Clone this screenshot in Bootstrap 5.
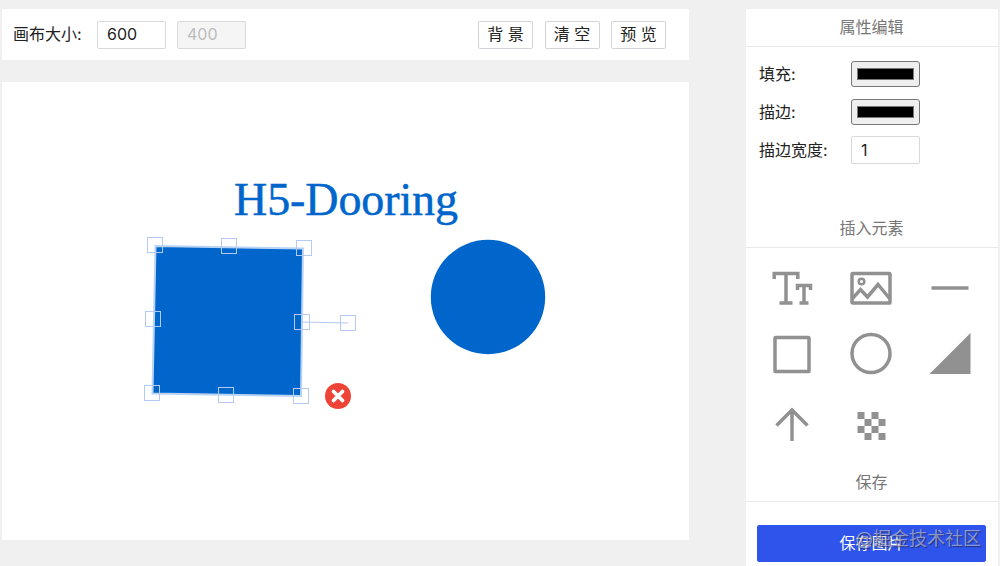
<!DOCTYPE html>
<html lang="zh-CN">
<head>
  <meta charset="UTF-8"/>
  <meta name="viewport" content="width=device-width, initial-scale=1.0"/>
  <title>H5-Dooring 图片编辑器</title>
  <link href="https://cdn.jsdelivr.net/npm/bootstrap@5.3.0/dist/css/bootstrap.min.css" rel="stylesheet"/>
  <script src="https://cdn.jsdelivr.net/npm/bootstrap@5.3.0/dist/js/bootstrap.bundle.min.js" defer></script>
  <style>
    :root {
      --page-bg: #f0f0f0;
      --shape-blue: #0066cc;
      --save-blue: #2f54eb;
      --icon-gray: #919191;
    }

    body {
      background-color: var(--page-bg);
      font-family: Inter, "Noto Sans CJK SC", sans-serif;
      font-size: 16px;
      line-height: 24px;
      color: #222;
    }

    .editor {
      height: 566px;
      padding: 9px 2px 0;
    }

    .workspace { width: 687px; }

    .toolbar {
      height: 51px;
      padding: 0 23px 0 11px;
      margin-bottom: 22px;
    }

    .size-label { width: 84px; padding-bottom: 2px; }
    .size-group { gap: 11px; }
    .tool-group { gap: 11.5px; }

    .field.form-control {
      width: 69px;
      height: 28px;
      padding: 0 9px;
      font-size: 16px;
      line-height: 26px;
      color: #222;
      border: 1px solid #d9d9d9;
      border-radius: 2px;
    }

    .size-group .field.form-control { padding-bottom: 1px; }

    .field.form-control:disabled {
      background-color: #f5f5f5;
      color: #bcbcbc;
    }

    .tool-btn.btn {
      width: 55px;
      height: 28px;
      padding: 0;
      font-size: 16px;
      line-height: 25px;
      color: #222;
      background-color: white;
      border: 1px solid #d4d4d8;
      border-radius: 2px;
    }

    .stage { height: 458px; }

    .stage text {
      font-family: "Liberation Serif", serif;
      font-size: 46px;
      fill: var(--shape-blue);
      stroke: var(--shape-blue);
      stroke-width: 0.5;
    }

    .sidebar { width: 252px; }

    .panel-title {
      height: 38px;
      padding-right: 1px;
      font-size: 16px;
      line-height: 37px;
      font-weight: 400;
      color: #777;
      border-bottom: 1px solid #e9e9e9;
    }

    .props {
      height: 163px;
      padding: 14.4px 13px 0;
    }

    .prop-row { height: 26px; margin-bottom: 11.7px; }
    .prop-label { width: 92px; }

    .swatch {
      width: 69px;
      height: 26px;
      padding: 6px 5px;
      background-color: #efefef;
      border: 1px solid #777;
      border-radius: 3px;
    }

    .swatch span {
      height: 100%;
      background-color: black;
      border: 1px solid #777;
    }

    .elements {
      height: 216px;
      padding: 7px 8px 0 7px;
    }

    .elements svg {
      width: 48px;
      height: 48px;
      fill: none;
      stroke: var(--icon-gray);
      stroke-width: 3.5;
    }

    .elements .solid { fill: var(--icon-gray); stroke: none; }
    .cell { height: 66px; }

    .save-area { padding: 23px 12px 0 11px; }

    .save-btn.btn {
      height: 37px;
      padding: 0;
      font-size: 16px;
      line-height: 35px;
      color: white;
      background-color: var(--save-blue);
      border-color: var(--save-blue);
      border-radius: 2px;
    }

    .watermark {
      right: 17px;
      top: 24px;
      font-size: 18px;
      line-height: 26px;
      color: rgba(205, 205, 215, 0.6);
      text-shadow: 1px 1px 1px rgba(30, 30, 60, 0.65);
      pointer-events: none;
    }
  </style>
</head>
<body>

<div class="editor d-flex justify-content-between overflow-hidden">
  <main class="workspace">
    <div class="toolbar bg-white d-flex align-items-center justify-content-between">
      <div class="d-flex align-items-center">
        <span class="size-label text-nowrap">画布大小:</span>
        <div class="size-group d-flex">
          <input type="text" class="field form-control" value="600" aria-label="宽度">
          <input type="text" class="field form-control" value="400" aria-label="高度" disabled>
        </div>
      </div>
      <div class="tool-group d-flex">
        <button type="button" class="tool-btn btn">背 景</button>
        <button type="button" class="tool-btn btn">清 空</button>
        <button type="button" class="tool-btn btn">预 览</button>
      </div>
    </div>

    <div class="stage bg-white">
      <svg class="d-block" width="687" height="458" viewBox="2 82 687 458">
        <text x="234" y="215" textLength="224">H5-Dooring</text>
        <circle cx="488" cy="297" r="57.2" fill="#0066cc"/>
        <path d="M155.500 246L303 248.500L301 396L152.500 393.500Z" fill="#0066cc" stroke="#b9d3f5" stroke-width="2"/>
        <!-- selection handles -->
        <g fill="none" stroke="#b4c9f3" stroke-width="1">
          <path d="M302 322L348 323"/>
          <rect x="147.500" y="237.500" width="15" height="15"/>
          <rect x="221.500" y="238.500" width="15" height="15"/>
          <rect x="296.500" y="240.500" width="15" height="15"/>
          <rect x="145.500" y="311.500" width="15" height="15"/>
          <rect x="294.500" y="314.500" width="15" height="15"/>
          <rect x="340.500" y="315.500" width="15" height="15"/>
          <rect x="144.500" y="385.500" width="15" height="15"/>
          <rect x="218.500" y="387.500" width="15" height="15"/>
          <rect x="293.500" y="388.500" width="15" height="15"/>
        </g>
        <!-- delete control -->
        <circle cx="338" cy="396" r="13" fill="#ee4438"/>
        <path d="M333.500 391.500L342.500 400.500M342.500 391.500L333.500 400.500" stroke="white" stroke-width="3.800" stroke-linecap="round"/>
      </svg>
    </div>
  </main>

  <aside class="sidebar bg-white">
    <h2 class="panel-title text-center mb-0">属性编辑</h2>
    <div class="props">
      <div class="prop-row d-flex align-items-center">
        <span class="prop-label">填充:</span>
        <button type="button" class="swatch" aria-label="填充"><span class="d-block"></span></button>
      </div>
      <div class="prop-row d-flex align-items-center">
        <span class="prop-label">描边:</span>
        <button type="button" class="swatch" aria-label="描边"><span class="d-block"></span></button>
      </div>
      <div class="prop-row d-flex align-items-center">
        <span class="prop-label">描边宽度:</span>
        <input type="text" class="field form-control" value="1" aria-label="描边宽度">
      </div>
    </div>

    <h2 class="panel-title text-center mb-0">插入元素</h2>
    <div class="elements">
      <div class="row row-cols-3 g-0">
        <div class="cell col d-flex justify-content-center align-items-center">
          <svg viewBox="0 0 48 48"><path d="M6.200 15V9.500H29.800V15M18 9.500V39M11.500 39H24.500M29.500 26V21.500H42.500V26M36 21.500V39M31.500 39H40.500"/></svg>
        </div>
        <div class="cell col d-flex justify-content-center align-items-center">
          <svg viewBox="0 0 48 48"><rect x="5" y="9.500" width="38" height="29.500" rx="0.800"/><circle cx="14.500" cy="17.500" r="2.800" stroke-width="2.500"/><path d="M5 35L13.500 25.500L20.500 33L31 20.500L43 35"/></svg>
        </div>
        <div class="cell col d-flex justify-content-center align-items-center">
          <svg viewBox="0 0 48 48"><path d="M5.500 24H42.500"/></svg>
        </div>
        <div class="cell col d-flex justify-content-center align-items-center">
          <svg viewBox="0 0 48 48"><rect x="7" y="7.500" width="34" height="34" rx="0.800"/></svg>
        </div>
        <div class="cell col d-flex justify-content-center align-items-center">
          <svg viewBox="0 0 48 48"><circle cx="24" cy="23.500" r="19"/></svg>
        </div>
        <div class="cell col d-flex justify-content-center align-items-center">
          <svg viewBox="0 0 48 48"><path class="solid" d="M3.500 44L44.500 3V44Z"/></svg>
        </div>
        <div class="cell col d-flex justify-content-center align-items-center pt-2">
          <svg viewBox="0 0 48 48"><path d="M24 41V10M8.500 25.500L24 10L39.500 25.500"/></svg>
        </div>
        <div class="cell col d-flex justify-content-center align-items-center pt-2">
          <svg viewBox="0 0 48 48"><path class="solid" d="M10.500 12h7v7h-7zM24.500 12h7v7h-7zM17.500 19h7v7h-7zM31.500 19h7v7h-7zM10.500 26h7v7h-7zM24.500 26h7v7h-7zM17.500 33h7v7h-7zM31.500 33h7v7h-7z"/></svg>
        </div>
      </div>
    </div>

    <h2 class="panel-title text-center mb-0">保存</h2>
    <div class="save-area position-relative">
      <button type="button" class="save-btn btn w-100">保存图片</button>
      <span class="watermark position-absolute text-nowrap">@掘金技术社区</span>
    </div>
  </aside>
</div>

</body>
</html>
